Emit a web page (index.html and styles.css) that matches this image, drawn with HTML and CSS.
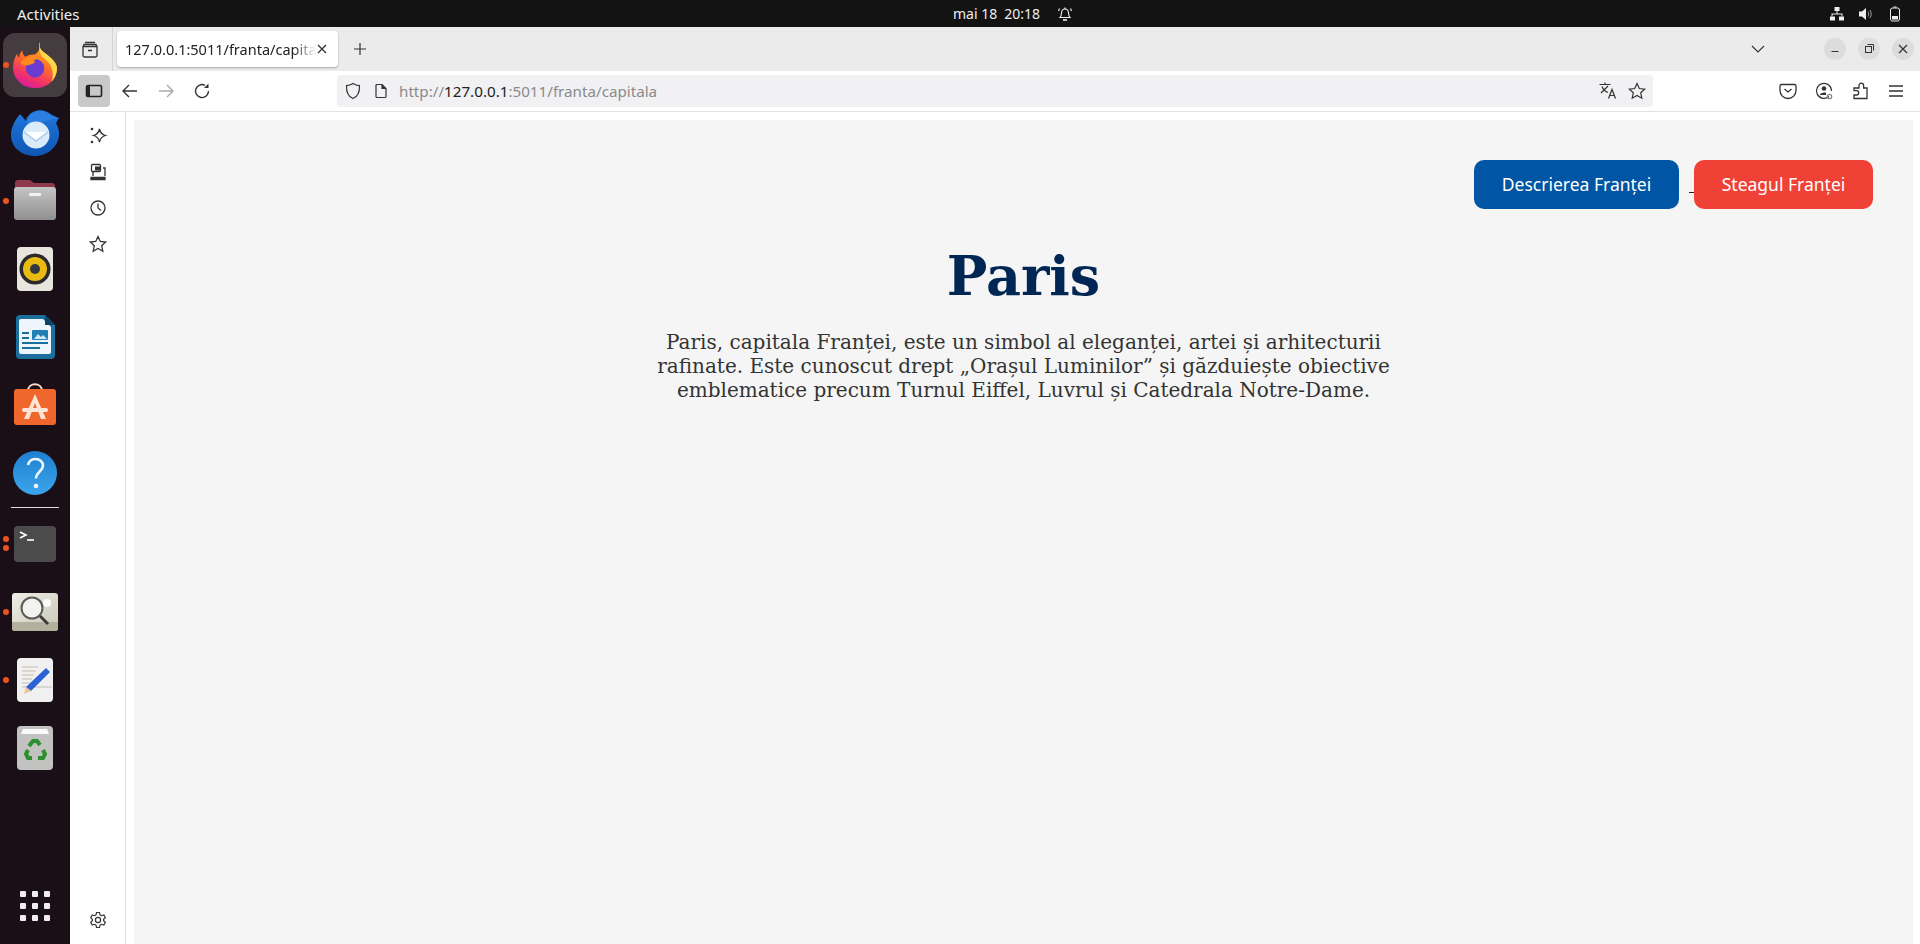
FILE: index.html
```html
<!DOCTYPE html>
<html lang="ro">
<head>
<meta charset="utf-8">
<title>Paris</title>
<link rel="stylesheet" href="styles.css">
</head>
<body>
<header class="topbar">
  <span class="activities">Activities</span>
  <div class="clock"><span>mai 18</span><span>20:18</span>
    <svg class="ic16" viewBox="0 0 16 16" fill="none" stroke="#eee" stroke-width="1.1"><path d="M3 11.500c1.200-1.200 1.400-2.400 1.500-4.500C4.600 4.400 6 3 8 3s3.400 1.400 3.500 4c.1 2.100.3 3.300 1.500 4.500z"/><path d="M8 1.500V3M2.500 2.500 1.500 5M13.500 2.500l1 2.500"/><path d="M6 14h4" stroke-width="1.600"/></svg>
  </div>
  <div class="tray">
    <svg class="ic16" viewBox="0 0 16 16" fill="#eee"><rect x="5.500" y="1" width="5" height="4"/><rect x="1" y="10.500" width="5" height="4"/><rect x="10" y="10.500" width="5" height="4"/><path d="M7.500 5h1v2.500h5v3h-1V8.500h-9v2h-1v-3h5z"/></svg>
    <svg class="ic16" viewBox="0 0 16 16" fill="#eee"><path d="M1 5.500h3L8 2v12l-4-3.500H1z"/><path d="M10 5.500c1 1.500 1 3.500 0 5M12 4c1.600 2.400 1.600 5.600 0 8" fill="none" stroke="#999"/></svg>
    <svg class="ic16" viewBox="0 0 16 16" fill="none" stroke="#eee"><rect x="3.500" y="2" width="9" height="13" rx="2"/><path d="M6.500 1h3" /><rect x="5" y="10" width="6" height="3.500" fill="#eee" stroke="none"/></svg>
  </div>
</header>
<div class="desk">
  <nav class="dock">
    <div class="slot active"><i class="dot"></i>
      <svg class="app44" viewBox="0 0 42 44"><defs><linearGradient id="ff" x1="0.800" y1="0" x2="0.350" y2="1"><stop offset="0" stop-color="#ffc82e"/><stop offset="0.450" stop-color="#ff7424"/><stop offset="0.800" stop-color="#f1306a"/><stop offset="1" stop-color="#d91e9c"/></linearGradient></defs><path d="M25 0C24 5 27 8 31 11C38 16 42 21 42 25C42 36 33 44 21 44C9 44 0 35 0 24C0 19 2 14 4 11C4 13 5 14 6 15C6 12 7 10 9 8C9 11 10 13 12 14C15 12 18 12 21 12C25 9 27 5 25 0Z" fill="url(#ff)"/><path d="M25 0C24 5 27 8 31 11C38 16 42 21 42 25C42 30 40 34 37 38C40 28 36 20 30 16C27 14 24 8 25 0Z" fill="#ffd84a"/><circle cx="21" cy="25" r="8.800" fill="#6a3bd1"/><path d="M7 20C11 13 24 11 31 19C25 15 21 16 20 18C22 19 20 21 18 21C14 23 10 23 7 20Z" fill="#ff8a1c"/></svg>
    </div>
    <div class="slot">
      <svg class="app48" viewBox="0 0 48 46"><defs><linearGradient id="tb" x1="0" y1="0" x2="0" y2="1"><stop offset="0" stop-color="#1e78dd"/><stop offset="1" stop-color="#0f56b3"/></linearGradient></defs><path d="M9 4C3 11 0 18 0 25C0 37 10 46 24 46C37 46 48 36 48 24C48 20 47 17 45 13L48 8L41 5C35 0 28-1 22 2C18 4 15 8 15 11C13 9 11 6 9 4Z" fill="url(#tb)"/><path d="M22 3C28 0 36 1 41 6L47 9C40 9 35 11 30 12C25 12 20 13 16 16C16 10 18 6 22 3Z" fill="#2c7fe0"/><circle cx="25" cy="25" r="13.500" fill="#dcebfa"/><path d="M13 22l12 9 12-9" fill="#fff" stroke="#a9c9ec" stroke-width="1.500"/></svg>
    </div>
    <div class="slot"><i class="dot"></i>
      <svg class="app44" viewBox="0 0 44 44"><defs><linearGradient id="fo" x1="0" y1="0" x2="0" y2="1"><stop offset="0" stop-color="#c5c5c5"/><stop offset="1" stop-color="#8f8f8f"/></linearGradient></defs><path d="M2 4q0-3 3-3h12l4 3h18q3 0 3 3v6H2z" fill="#8f3a4a"/><rect x="1" y="8" width="42" height="33" rx="3" fill="url(#fo)"/><rect x="16" y="14" width="12" height="3" rx="1" fill="#f2f2f2"/></svg>
    </div>
    <div class="slot">
      <svg class="app44" viewBox="0 0 44 44"><rect x="4" y="0" width="36" height="44" rx="4" fill="#e8e5dc"/><circle cx="22" cy="22" r="15.500" fill="#2a2a2e"/><circle cx="22" cy="22" r="12" fill="#e9bb12"/><circle cx="22" cy="22" r="5" fill="#33383f"/></svg>
    </div>
    <div class="slot">
      <svg class="app44" viewBox="0 0 44 44"><path d="M7 0h25l10 10v30q0 4-4 4H7q-4 0-4-4V4q0-4 4-4z" fill="#1c6f9c"/><path d="M8 4h22l8 8v25q0 2-2 2H8q-2 0-2-2V6q0-2 2-2z" fill="#eef6fb"/><path d="M32 0l10 10H32z" fill="#0f4564"/><path d="M9 17h7v2H9zm0 5h7v2H9zm0 5h26v2H9zm0 5h18v2H9z" fill="#1c6f9c"/><rect x="19" y="15" width="16" height="10" rx="1" fill="#1f80b8"/><path d="M21 24l4-5 3 3 2-2 4 4z" fill="#d5e9f5"/></svg>
    </div>
    <div class="slot">
      <svg class="app44" viewBox="0 0 44 44"><path d="M15 8c0-9 14-9 14 0" fill="none" stroke="#fbdccb" stroke-width="2"/><rect x="1" y="6" width="42" height="36" rx="3" fill="#f0672d"/><path d="M22 11l-11 25h5l6-16 6 16h5z" fill="#fce4d6"/><rect x="9" y="25" width="26" height="4" rx="2" fill="#fce4d6"/></svg>
    </div>
    <div class="slot">
      <svg class="app44" viewBox="0 0 44 44"><defs><linearGradient id="he" x1="0" y1="0" x2="0" y2="1"><stop offset="0" stop-color="#1f7fcf"/><stop offset="1" stop-color="#3ba5ec"/></linearGradient></defs><circle cx="22" cy="22" r="22" fill="url(#he)"/><path d="M15 14c1-4 4-6 7.500-6 4.500 0 7.500 3 7.500 6.500 0 6-7 6-7 13" fill="none" stroke="#eef6fc" stroke-width="2.600"/><circle cx="23" cy="35" r="2.300" fill="#eef6fc"/></svg>
    </div>
    <div class="dock-sep"></div>
    <div class="slot"><i class="dot dot-a"></i><i class="dot dot-b"></i>
      <svg class="app44" viewBox="0 0 44 36"><rect x="1" y="0" width="42" height="36" rx="4" fill="#4b4b4b"/><path d="M7 6l6 3-6 3" fill="none" stroke="#fff" stroke-width="1.600"/><path d="M14 14h7" stroke="#fff" stroke-width="1.600"/></svg>
    </div>
    <div class="slot"><i class="dot"></i>
      <svg class="app46" viewBox="0 0 46 38"><defs><linearGradient id="sc" x1="0" y1="0" x2="1" y2="1"><stop offset="0" stop-color="#eeeee8"/><stop offset="1" stop-color="#c9c7b6"/></linearGradient></defs><rect width="46" height="38" rx="3" fill="url(#sc)"/><path d="M0 29h46v6q0 3-3 3H3q-3 0-3-3z" fill="#b3b19e"/><circle cx="35" cy="10" r="4" fill="#fbfbf8"/><circle cx="20" cy="15" r="10.500" fill="#f2f2ee" stroke="#5a5a58" stroke-width="2"/><path d="M28 23l8 8" stroke="#3c3c3c" stroke-width="3"/></svg>
    </div>
    <div class="slot"><i class="dot"></i>
      <svg class="app44" viewBox="0 0 44 44"><rect x="4" y="0" width="36" height="44" rx="4" fill="#f0f0f0"/><path d="M9 9h16M9 13h14M9 17h12M9 21h10M9 25h8M9 29h30" stroke="#c4bfb3"/><path d="M33 10l4 4-19 19-5-4z" fill="#2b63d6"/><path d="M13 29l5 4-7 3z" fill="#f0c090"/></svg>
    </div>
    <div class="slot">
      <svg class="app44" viewBox="0 0 44 44"><rect x="4" y="0" width="36" height="44" rx="4" fill="#c2c2c0"/><path d="M8 8l2-5h24l2 5z" fill="#fafafa"/><g fill="none" stroke="#2f8f2f" stroke-width="4"><path d="M16 20l4-5h4l3 4"/><path d="M30 24l2 4-2 4h-5"/><path d="M19 32h-4l-2-4 2-4"/></g></svg>
    </div>
    <div class="grid-slot">
      <div class="appgrid"><b></b><b></b><b></b><b></b><b></b><b></b><b></b><b></b><b></b></div>
    </div>
  </nav>
  <main class="browser">
    <div class="tabbar">
      <div class="tab-left">
        <svg class="ic20" viewBox="0 0 20 20" fill="none" stroke="#333" stroke-width="1.300"><path d="M5 2.500h10M3 6.500h14v9a1.500 1.500 0 0 1-1.500 1.500h-11A1.500 1.500 0 0 1 3 15.500z"/><path d="M3.500 6.500 4 4.500h12l.5 2M8 10.500h4"/></svg>
      </div>
      <div class="tab"><span class="tab-title">127.0.0.1:5011/franta/capitala</span>
        <svg class="ic12" viewBox="0 0 12 12" stroke="#333" stroke-width="1.300"><path d="M2 2l8 8M10 2l-8 8"/></svg>
      </div>
      <svg class="ic16 newtab" viewBox="0 0 16 16" stroke="#333" stroke-width="1.200"><path d="M8 2v12M2 8h12"/></svg>
      <svg class="ic16 chev" viewBox="0 0 16 16" fill="none" stroke="#333" stroke-width="1.100"><path d="M2 5l6 6 6-6"/></svg>
      <div class="winctl">
        <span class="wbtn"><svg class="ic12" viewBox="0 0 12 12" stroke="#333"><path d="M2.500 8.500h7"/></svg></span>
        <span class="wbtn"><svg class="ic12" viewBox="0 0 12 12" fill="none" stroke="#333"><rect x="2.500" y="3.500" width="6" height="6"/><path d="M4.500 1.500h6v6"/></svg></span>
        <span class="wbtn"><svg class="ic12" viewBox="0 0 12 12" stroke="#333" stroke-width="1.200"><path d="M2 2l8 8M10 2l-8 8"/></svg></span>
      </div>
    </div>
    <div class="toolbar">
      <span class="sb-btn"><svg class="ic20" viewBox="0 0 20 20" fill="none" stroke="#222" stroke-width="1.600"><rect x="2.500" y="4.500" width="15" height="11" rx="1.500"/><rect x="3" y="5" width="3" height="10" fill="#222" stroke="none"/></svg></span>
      <svg class="ic20 nav1" viewBox="0 0 20 20" fill="none" stroke="#333" stroke-width="1.400"><path d="M17 10H3.500M9 4l-6 6 6 6"/></svg>
      <svg class="ic20 nav2" viewBox="0 0 20 20" fill="none" stroke="#aaa" stroke-width="1.400"><path d="M3 10h13.500M11 4l6 6-6 6"/></svg>
      <svg class="ic20 nav3" viewBox="0 0 20 20" fill="none" stroke="#333" stroke-width="1.400"><path d="M16.500 10A6.500 6.500 0 1 1 13 4.300"/><path d="M16.500 2.500v4.500H12z" fill="#333" stroke="none"/></svg>
      <div class="urlbar">
        <svg class="ic20 shield" viewBox="0 0 20 20" fill="none" stroke="#333" stroke-width="1.200"><path d="M10 2.500c2 1.300 4 2 6.500 2.200C16.700 11 15 15.500 10 17.500 5 15.500 3.300 11 3.500 4.700 6 4.500 8 3.800 10 2.500z"/></svg>
        <svg class="ic16 pageic" viewBox="0 0 16 16" fill="none" stroke="#333" stroke-width="1.200"><path d="M3 2.500a1 1 0 0 1 1-1h5l4 4v8a1 1 0 0 1-1 1H4a1 1 0 0 1-1-1z"/><path d="M9 1.500v4h4" fill="#333"/></svg>
        <span class="url"><span class="dim">http://</span>127.0.0.1<span class="dim">:5011/franta/capitala</span></span>
        <svg class="ic20 trans" viewBox="0 0 20 20" fill="none" stroke="#333" stroke-width="1.200"><path d="M1.500 3.500h11M7 1.500v2M3 12l7-7M4 5.500c1 3 3.500 5 6 6"/><path d="M10.500 17.500l3.500-9 3.500 9M11.800 14.500h4.400"/></svg>
        <svg class="ic20 star" viewBox="0 0 20 20" fill="none" stroke="#333" stroke-width="1.200"><path d="M10 2.500l2.300 5 5.400.6-4 3.700 1.100 5.400L10 14.500l-4.800 2.700 1.100-5.400-4-3.700 5.400-.6z"/></svg>
      </div>
      <div class="tools">
        <svg class="ic20" viewBox="0 0 20 20" fill="none" stroke="#333" stroke-width="1.300"><path d="M3.500 3.500h13a1.500 1.500 0 0 1 1.500 1.500v4.500a8 8 0 0 1-16 0V5a1.500 1.500 0 0 1 1.500-1.500z"/><path d="M6.500 8l3.500 3 3.500-3"/></svg>
        <svg class="ic20" viewBox="0 0 20 20" fill="none" stroke="#333" stroke-width="1.200"><path d="M15 15.500A7.500 7.500 0 1 1 17.500 10"/><circle cx="10" cy="7.500" r="2.300" fill="#333" stroke="none"/><path d="M5.500 14.500c1-2.500 3.500-3.200 6.500-2.800v2.300H5.500z" fill="#333" stroke="none"/><circle cx="15.500" cy="15.500" r="2.200" stroke="#888" stroke-width="1.300"/></svg>
        <svg class="ic20" viewBox="0 0 20 20" fill="none" stroke="#333" stroke-width="1.300"><path d="M4 7h5V4.500a2.300 2.300 0 0 1 4.600 0V7H17v10.500H4V14h2.500a2.200 2.200 0 0 0 0-4.400H4z"/></svg>
        <svg class="ic20" viewBox="0 0 20 20" stroke="#333" stroke-width="1.300"><path d="M3 5h14M3 10h14M3 15h14"/></svg>
      </div>
    </div>
    <div class="viewport">
      <aside class="sidebar">
        <svg class="ic20" viewBox="0 0 20 20" fill="none" stroke="#333" stroke-width="1.300"><path d="M11.500 3c.7 3.500 2.500 5.500 6 6.500-3.500 1-5.300 3-6 6.500-.7-3.500-2.500-5.500-6-6.500 3.500-1 5.300-3 6-6.500z"/><circle cx="4" cy="3" r="1.300" fill="#333" stroke="none"/><circle cx="4" cy="16" r="1.300" fill="#333" stroke="none"/></svg>
        <svg class="ic20" viewBox="0 0 20 20" fill="none" stroke="#333" stroke-width="1.300"><rect x="3.500" y="2.500" width="9" height="7" rx="1"/><rect x="7" y="4.500" width="6" height="4" fill="#333" stroke="none"/><path d="M15 6h2v8M5 10v4"/><path d="M3 15.500h14v2H3z" fill="#333"/></svg>
        <svg class="ic20" viewBox="0 0 20 20" fill="none" stroke="#333" stroke-width="1.300"><circle cx="10" cy="10" r="7"/><path d="M10 5.500V10l3 2.500"/></svg>
        <svg class="ic20" viewBox="0 0 20 20" fill="none" stroke="#333" stroke-width="1.300"><path d="M10 2.500l2.300 5 5.400.6-4 3.700 1.100 5.400L10 14.500l-4.800 2.700 1.100-5.400-4-3.700 5.400-.6z"/></svg>
        <svg class="ic20 gear" viewBox="0 0 20 20" fill="none" stroke="#333" stroke-width="1.200"><circle cx="10" cy="10" r="2.600"/><path d="M8.500 2.500h3l.5 2.300 1.600.9 2.200-.7 1.500 2.600-1.700 1.600v1.600l1.700 1.600-1.500 2.600-2.200-.7-1.600.9-.5 2.300h-3l-.5-2.300-1.600-.9-2.200.7-1.500-2.600 1.700-1.600V9.200L2.700 7.600l1.500-2.600 2.200.7L8 4.800z"/></svg>
      </aside>
      <div class="page-wrap">
        <section class="page">
          <div class="actions">
            <a class="btn btn-blue" href="#">Descrierea Franței</a>
            <span class="link-gap"></span>
            <a class="btn btn-red" href="#">Steagul Franței</a>
          </div>
          <h1 class="title">Paris</h1>
          <p class="lead">Paris, capitala Franței, este un simbol al eleganței, artei și arhitecturii rafinate. Este cunoscut drept „Orașul Luminilor” și găzduiește obiective emblematice precum Turnul Eiffel, Luvrul și Catedrala Notre-Dame.</p>
        </section>
      </div>
    </div>
  </main>
</div>
</body>
</html>
```

FILE: styles.css
```css
* { box-sizing: border-box; }
html, body { margin: 0; height: 100%; overflow: hidden; }
body { display: flex; flex-direction: column; font-family: "Noto Sans", sans-serif; background: #fff; }
svg { display: block; flex: none; }
.ic12 { width: 12px; height: 12px; }
.ic16 { width: 16px; height: 16px; }
.ic20 { width: 20px; height: 20px; }
.app44 { width: 44px; height: auto; }
.app46 { width: 46px; height: 38px; }
.app48 { width: 48px; height: 46px; }

.topbar { height: 27px; flex: none; background: #131313; color: #eee; font-size: 14px; display: grid; grid-template-columns: 1fr auto 1fr; align-items: center; padding: 0 17px; }
.activities { font-size: 15px; }
.clock { display: flex; align-items: center; gap: 7px; font-size: 14px; margin-left: 106px; }
.clock svg { margin-left: 10px; }
.tray { display: flex; justify-content: flex-end; gap: 13px; }

.desk { flex: 1; display: flex; min-height: 0; }
.dock { width: 70px; flex: none; background: #1a0e17; display: flex; flex-direction: column; padding-top: 4px; }
.slot { height: 68px; flex: none; display: flex; align-items: center; justify-content: center; position: relative; }
.slot.active::before { content: ""; position: absolute; left: 3px; right: 3px; top: 2px; bottom: 2px; border-radius: 12px; background: #453c40; }
.slot svg { position: relative; }
.dot { position: absolute; left: 3px; top: 31px; width: 6px; height: 6px; border-radius: 50%; background: #e95420; z-index: 1; }
.dot-a { top: 26px; }
.dot-b { top: 35px; }
.dock-sep { height: 1px; margin: 0 11px 2px; background: #ddd; flex: none; }
.grid-slot { margin-top: auto; height: 68px; display: flex; align-items: center; justify-content: center; margin-bottom: 4px; }
.appgrid { display: grid; grid-template-columns: repeat(3, 6px); gap: 6px; }
.appgrid b { width: 6px; height: 6px; background: #f2eef0; border-radius: 1px; }

.browser { flex: 1; min-width: 0; display: flex; flex-direction: column; }
.tabbar { height: 44px; flex: none; background: #ebebeb; display: flex; align-items: center; padding-left: 10px; }
.tab-left { width: 33px; height: 44px; border-right: 1px solid #d4d4d4; display: flex; align-items: center; padding-top: 2px; }
.tab { width: 221px; height: 36px; margin-left: 4px; background: #fff; border-radius: 4px; box-shadow: 0 1px 2px rgba(0,0,0,.3); display: flex; align-items: center; padding: 0 10px 0 8px; font-size: 14.500px; color: #222; }
.tab-title { flex: 1; white-space: nowrap; overflow: hidden; -webkit-mask-image: linear-gradient(to right, #000 88%, transparent); mask-image: linear-gradient(to right, #000 88%, transparent); }
.newtab { margin-left: 14px; }
.chev { margin-left: auto; }
.winctl { display: flex; gap: 12px; margin: 0 6px 0 58px; }
.wbtn { width: 22px; height: 22px; border-radius: 50%; background: #dcdcdc; display: flex; align-items: center; justify-content: center; }

.toolbar { height: 41px; flex: none; background: #fff; border-bottom: 1px solid #e2e2e2; display: flex; align-items: center; padding: 0 14px 1px 8px; }
.sb-btn { width: 32px; height: 32px; background: #c9c9c9; border-radius: 4px; display: flex; align-items: center; justify-content: center; }
.nav1 { margin-left: 10px; }
.nav2 { margin-left: 16px; }
.nav3 { margin-left: 16px; }
.urlbar { width: 1316px; height: 32px; margin-left: 125px; background: #f1f1f3; border-radius: 4px; display: flex; align-items: center; padding: 0 6px; }
.pageic { margin-left: 10px; }
.url { margin-left: 10px; font-size: 15.200px; color: #222; }
.dim { color: #8a8a8a; }
.trans { margin-left: auto; }
.star { margin-left: 9px; }
.tools { margin-left: auto; display: flex; gap: 16px; }

.viewport { flex: 1; display: flex; min-height: 0; }
.sidebar { width: 56px; flex: none; border-right: 1px solid #e2e2e2; display: flex; flex-direction: column; align-items: center; gap: 16px; padding: 14px 0 14px; }
.gear { margin-top: auto; }
.page-wrap { flex: 1; min-width: 0; padding: 8px 7px 0 8px; }
.page { height: 100%; background: #f5f5f5; text-align: center; padding: 40px 40px 0; }
.actions { display: flex; justify-content: flex-end; align-items: flex-start; }
.btn { height: 49px; padding-bottom: 2px; border-radius: 10px; color: #fff; text-decoration: none; font-size: 17.500px; display: flex; align-items: center; justify-content: center; }
.btn-blue { width: 205px; background: #0055a4; }
.btn-red { width: 179px; background: #ef4135; }
.link-gap { width: 5px; height: 33px; margin-left: 10px; border-bottom: 1px solid #222; }
.title { margin: 34px 0 0; font-family: "DejaVu Serif", serif; font-size: 54px; font-weight: 700; line-height: 66px; color: #002654; }
.lead { width: 760px; margin: 22px auto 0; font-family: "DejaVu Serif", serif; font-size: 20px; line-height: 23.800px; color: #333; }
```
